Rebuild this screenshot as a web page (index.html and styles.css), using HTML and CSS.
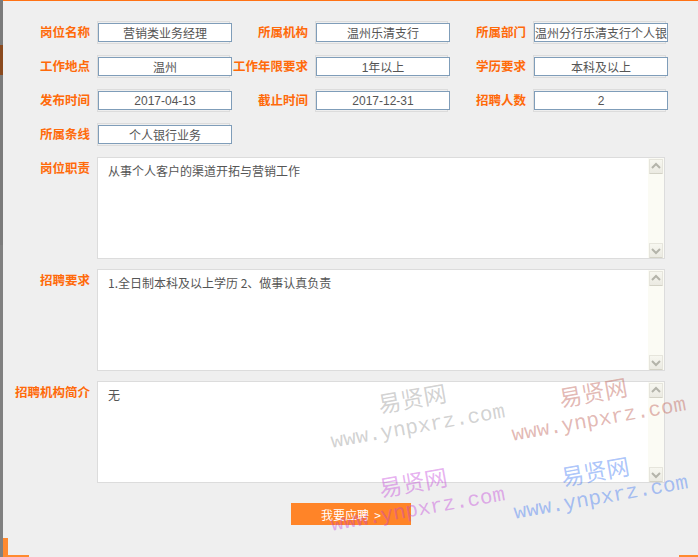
FILE: index.html
```html
<!DOCTYPE html>
<html lang="zh-CN">
<head>
<meta charset="utf-8">
<title>岗位信息</title>
<link rel="stylesheet" href="styles.css">
</head>
<body>
<div class="page">
  <div class="rail"></div>
  <div class="main">
    <div class="row">
      <div class="cell"><span class="lbl">岗位名称</span><span class="field"><input class="inp" value="营销类业务经理" readonly></span></div>
      <div class="cell"><span class="lbl">所属机构</span><span class="field"><input class="inp" value="温州乐清支行" readonly></span></div>
      <div class="cell"><span class="lbl">所属部门</span><span class="field"><input class="inp" value="温州分行乐清支行个人银行部" readonly></span></div>
    </div>
    <div class="row">
      <div class="cell"><span class="lbl">工作地点</span><span class="field"><input class="inp" value="温州" readonly></span></div>
      <div class="cell"><span class="lbl">工作年限要求</span><span class="field"><input class="inp" value="1年以上" readonly></span></div>
      <div class="cell"><span class="lbl">学历要求</span><span class="field"><input class="inp" value="本科及以上" readonly></span></div>
    </div>
    <div class="row">
      <div class="cell"><span class="lbl">发布时间</span><span class="field"><input class="inp" value="2017-04-13" readonly></span></div>
      <div class="cell"><span class="lbl">截止时间</span><span class="field"><input class="inp" value="2017-12-31" readonly></span></div>
      <div class="cell"><span class="lbl">招聘人数</span><span class="field"><input class="inp" value="2" readonly></span></div>
    </div>
    <div class="row">
      <div class="cell"><span class="lbl">所属条线</span><span class="field"><input class="inp" value="个人银行业务" readonly></span></div>
    </div>

    <div class="area-row">
      <span class="lbl lbl-top">岗位职责</span>
      <div class="area">
        <div class="area-text">从事个人客户的渠道开拓与营销工作</div>
        <div class="sbar"><span class="sbtn"><svg width="14" height="15" viewBox="0 0 14 15"><polyline points="3,9 7,5 11,9" fill="none" stroke="#b4b4aa" stroke-width="2"/></svg></span><span class="sbtn"><svg width="14" height="15" viewBox="0 0 14 15"><polyline points="3,6 7,10 11,6" fill="none" stroke="#b4b4aa" stroke-width="2"/></svg></span></div>
      </div>
    </div>
    <div class="area-row">
      <span class="lbl lbl-top">招聘要求</span>
      <div class="area">
        <div class="area-text">1.全日制本科及以上学历 2、做事认真负责</div>
        <div class="sbar"><span class="sbtn"><svg width="14" height="15" viewBox="0 0 14 15"><polyline points="3,9 7,5 11,9" fill="none" stroke="#b4b4aa" stroke-width="2"/></svg></span><span class="sbtn"><svg width="14" height="15" viewBox="0 0 14 15"><polyline points="3,6 7,10 11,6" fill="none" stroke="#b4b4aa" stroke-width="2"/></svg></span></div>
      </div>
    </div>
    <div class="area-row">
      <span class="lbl lbl-top">招聘机构简介</span>
      <div class="area">
        <div class="area-text">无</div>
        <div class="sbar"><span class="sbtn"><svg width="14" height="15" viewBox="0 0 14 15"><polyline points="3,9 7,5 11,9" fill="none" stroke="#b4b4aa" stroke-width="2"/></svg></span><span class="sbtn"><svg width="14" height="15" viewBox="0 0 14 15"><polyline points="3,6 7,10 11,6" fill="none" stroke="#b4b4aa" stroke-width="2"/></svg></span></div>
      </div>
    </div>

    <div class="actions"><button class="apply" type="button">我要应聘&nbsp;&nbsp;&gt;</button></div>
  </div>

  <span class="corner-bl-v"></span>
  <span class="corner-bl-h"></span>
  <span class="corner-br"></span>

  <div class="wm-layer">
    <span class="wm wm-cn wm-gray c1">易贤网</span>
    <span class="wm wm-en wm-gray e1">www.ynpxrz.com</span>
    <span class="wm wm-cn wm-red c2">易贤网</span>
    <span class="wm wm-en wm-red e2">www.ynpxrz.com</span>
    <span class="wm wm-cn wm-pink c3">易贤网</span>
    <span class="wm wm-en wm-pink e3">www.ynpxrz.com</span>
    <span class="wm wm-cn wm-blue c4">易贤网</span>
    <span class="wm wm-en wm-blue e4">www.ynpxrz.com</span>
  </div>
</div>
</body>
</html>
```
FILE: styles.css
```css
html, body {
  margin: 0;
  padding: 0;
  background: #efefef;
}
.page {
  position: relative;
  width: 698px;
  height: 557px;
  overflow: hidden;
  display: flex;
  background: #efefef;
  font-family: "Noto Sans CJK SC", sans-serif;
}
.rail {
  width: 3px;
  flex: none;
  background: linear-gradient(#7b7b7b 0, #7b7b7b 45px, #8a4a1e 45px, #8a4a1e 75px, #7b7b7b 75px, #7b7b7b 245px, #808080 245px);
}
.main {
  flex: 1;
  border-top: 1px solid #ff7214;
  padding: 20px 10px 0 11px;
}
.row {
  display: flex;
  height: 23px;
  margin-bottom: 11px;
}
.cell {
  display: flex;
  width: 218px;
  flex: none;
}
.lbl {
  width: 76px;
  flex: none;
  margin-right: 7px;
  text-align: right;
  white-space: nowrap;
  font-family: "Noto Sans CJK SC", sans-serif;
  font-weight: bold;
  font-size: 12.5px;
  line-height: 22px;
  color: #ff6a0a;
}
.field {
  display: block;
  width: 133px;
  height: 23px;
  box-sizing: border-box;
  border: 1px solid #dcdcdc;
  padding-top: 1px;
}
.inp {
  display: block;
  width: 134px;
  height: 19px;
  box-sizing: border-box;
  margin: 0;
  padding: 0;
  border: 1px solid #7f9db9;
  background: #fff;
  color: #555;
  text-align: center;
  font-family: "Liberation Sans", "Noto Sans CJK SC", sans-serif;
  font-size: 12px;
  outline: none;
}
.area-row {
  display: flex;
  margin-bottom: 10px;
}
.lbl-top {
  line-height: 16px;
  padding-top: 3px;
}
.area {
  width: 568px;
  height: 102px;
  box-sizing: border-box;
  border: 1px solid #dcdcdc;
  background: #fff;
  display: flex;
}
.area-text {
  flex: 1;
  padding: 5px 10px;
  font-size: 12px;
  line-height: 16px;
  color: #555;
}
.sbar {
  width: 16px;
  flex: none;
  background: #fbfbf4;
  display: flex;
  flex-direction: column;
  justify-content: space-between;
  padding: 1px 0 0 1px;
  box-sizing: border-box;
}
.sbtn {
  display: block;
  width: 14px;
  height: 15px;
  box-sizing: border-box;
  background: linear-gradient(#f7f7f0, #ebeae2);
  border: 1px solid #e6e5dc;
  border-bottom-color: #d3d2c6;
  border-radius: 1px;
  overflow: hidden;
}
.sbtn svg {
  display: block;
  margin: -1px 0 0 -1px;
}
.actions {
  display: flex;
  justify-content: center;
  margin-top: 20px;
}
.apply {
  width: 120px;
  height: 22px;
  border: 0;
  padding: 0;
  background: #ff8428;
  color: #fff;
  font-family: "Noto Sans CJK SC", sans-serif;
  font-size: 12px;
}
.corner-bl-v {
  position: absolute;
  left: 3px;
  top: 538px;
  width: 5px;
  height: 19px;
  background: #ff8a30;
}
.corner-bl-h {
  position: absolute;
  left: 3px;
  top: 555px;
  width: 26px;
  height: 2px;
  background: #ff8a30;
}
.corner-br {
  position: absolute;
  left: 679px;
  top: 555px;
  width: 19px;
  height: 2px;
  background: #ff8a30;
}
.wm-layer {
  position: absolute;
  inset: 0;
  pointer-events: none;
}
.wm {
  position: absolute;
  white-space: nowrap;
  transform: translate(-50%, -50%) rotate(-10deg);
  line-height: 1;
}
.wm-cn {
  font-family: "Noto Sans CJK SC", sans-serif;
  font-size: 23px;
}
.wm-en {
  font-family: "Liberation Mono", monospace;
  font-size: 21px;
}
.wm-gray { color: rgba(147, 147, 147, 0.42); }
.wm-red { color: rgba(187, 87, 77, 0.42); }
.wm-pink { color: rgba(192, 57, 217, 0.4); }
.wm-blue { color: rgba(42, 107, 242, 0.4); }
.c1 { left: 412px; top: 398px; }
.e1 { left: 418px; top: 427px; }
.c2 { left: 593px; top: 392px; }
.e2 { left: 599px; top: 420px; }
.c3 { left: 413px; top: 482px; }
.e3 { left: 418px; top: 510px; }
.c4 { left: 595px; top: 471px; }
.e4 { left: 601px; top: 498px; }
```
